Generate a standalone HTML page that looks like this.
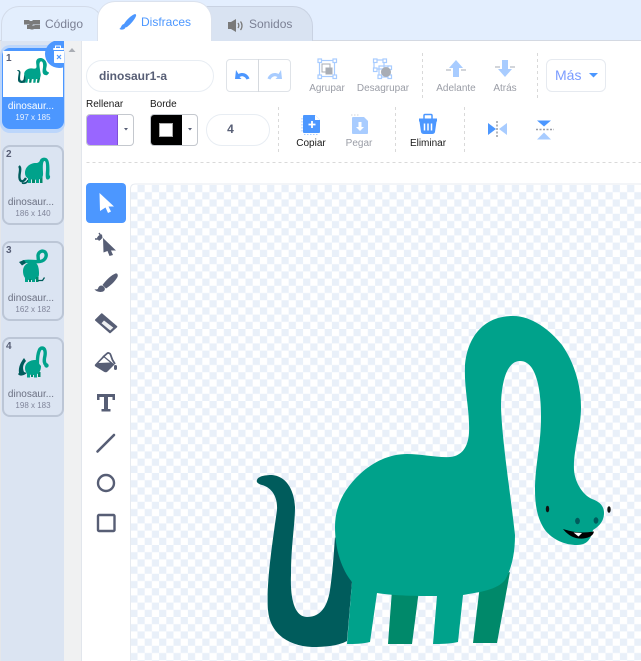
<!DOCTYPE html>
<html><head><meta charset="utf-8"><style>
html,body{margin:0;padding:0;background:#fff}
#p{position:relative;width:641px;height:661px;overflow:hidden;font-family:"Liberation Sans",sans-serif;color:#575e75;background:#fff}
#p div{position:absolute;box-sizing:border-box}
.t{white-space:nowrap;text-align:center;line-height:12px}
.l{font-size:10px;color:#9a9da6;width:70px}
.k{font-size:10px;color:#1a1a1a}
.n{font-size:10px;color:#6b7082;width:60px;left:1px}
.d{font-size:8px;color:#80859a;width:60px;left:3px}
.c{left:2px;width:62px;height:80px;border:2px solid #bcc6d6;border-radius:8px;background:#dbe4f2}
.i{font-size:10px;font-weight:bold;left:6px;color:#575e75}
svg{position:absolute;left:0;top:0}
</style></head><body><div id="p">
<div style="left:0;top:0;width:641px;height:41px;background:#e3eefe;border-bottom:1px solid #d4d9e2"></div>
<div style="left:1px;top:6px;width:102px;height:35px;background:#e3eefd;border:1px solid #d3dbe9;border-bottom:none;border-radius:18px 18px 0 0"></div>
<div style="left:205px;top:6px;width:108px;height:35px;background:#d9e3f2;border:1px solid #c9d2e2;border-bottom:none;border-radius:0 20px 0 0"></div>
<div style="left:97px;top:1px;width:115px;height:40px;background:#fff;border:1px solid #dbe2ee;border-bottom:none;border-radius:18px 18px 0 0"></div>
<div class="t" style="left:45px;top:18px;font-size:12px;color:#7b8094">Código</div>
<div class="t" style="left:141px;top:16px;font-size:12px;color:#4c97ff">Disfraces</div>
<div class="t" style="left:249px;top:18px;font-size:12px;color:#7b8094">Sonidos</div>

<div style="left:0;top:41px;width:64px;height:620px;background:#dbe4f2"></div>
<div style="left:0;top:41px;width:1px;height:620px;background:#e4e6ea"></div>
<div style="left:64px;top:41px;width:17px;height:620px;background:#f0f1f2"></div>
<div style="left:81px;top:41px;width:1px;height:620px;background:#e2e6ec"></div>

<div style="left:0;top:45px;width:65px;height:88px;background:#bcd6fb;border-radius:10px"></div>
<div style="left:2px;top:48px;width:62px;height:81px;background:#4c97ff;border-radius:8px"></div>
<div style="left:3px;top:51px;width:60px;height:46px;background:#fff"></div>
<div class="i" style="left:6px;top:53px">1</div>
<div class="t" style="left:1px;top:101px;width:60px;font-size:10px;color:#fff">dinosaur...</div>
<div class="t" style="left:3px;top:112px;width:60px;font-size:8px;color:#eaf2ff">197 x 185</div>

<div class="c" style="top:145px"></div><div class="i" style="top:149px">2</div>
<div class="t n" style="top:197px">dinosaur...</div><div class="t d" style="top:208px">186 x 140</div>
<div class="c" style="top:241px"></div><div class="i" style="top:245px">3</div>
<div class="t n" style="top:293px">dinosaur...</div><div class="t d" style="top:304px">162 x 182</div>
<div class="c" style="top:337px"></div><div class="i" style="top:341px">4</div>
<div class="t n" style="top:389px">dinosaur...</div><div class="t d" style="top:400px">198 x 183</div>

<div style="left:86px;top:60px;width:128px;height:32px;border:1px solid #e8edf3;border-radius:16px"></div>
<div class="t" style="left:99px;top:70px;font-size:12px;font-weight:bold;color:#575e75">dinosaur1-a</div>
<div style="left:226px;top:59px;width:65px;height:33px;border:1px solid #dfe3e8;border-radius:4px"></div>
<div style="left:258px;top:59px;width:1px;height:33px;background:#d5d9de"></div>
<div style="left:546px;top:59px;width:60px;height:33px;border:1px solid #e6eaf0;border-radius:6px"></div>
<div class="t" style="left:555px;top:68px;font-size:14px;line-height:15px;color:#7b9cff">Más</div>

<div class="t l" style="left:292px;top:83px;width:70px">Agrupar</div>
<div class="t l" style="left:348px;top:83px">Desagrupar</div>
<div class="t l" style="left:421px;top:83px">Adelante</div>
<div class="t l" style="left:470px;top:83px">Atrás</div>
<div class="t k" style="left:86px;top:99px">Rellenar</div>
<div class="t k" style="left:150px;top:99px">Borde</div>
<div style="left:86px;top:114px;width:48px;height:32px;border:1px solid #c4c8ce;border-radius:4px;overflow:hidden"><div style="left:-1px;top:-1px;width:32px;height:32px;background:#9966ff;border-right:1px solid #8050d8"></div></div>
<div style="left:150px;top:114px;width:48px;height:32px;border:1px solid #c4c8ce;border-radius:4px;overflow:hidden"><div style="left:-1px;top:-1px;width:32px;height:32px;background:#000"></div><div style="left:8px;top:8px;width:14px;height:14px;background:#fff;border:1px solid #aaa"></div></div>
<div style="left:206px;top:114px;width:64px;height:32px;border:1px solid #e8edf3;border-radius:16px"></div>
<div class="t" style="left:206px;top:123px;width:49px;font-size:12px;font-weight:bold;color:#575e75">4</div>
<div class="t k" style="left:276px;top:138px;width:70px">Copiar</div>
<div class="t l" style="left:324px;top:138px">Pegar</div>
<div class="t k" style="left:393px;top:138px;width:70px">Eliminar</div>

<div style="left:86px;top:183px;width:40px;height:40px;background:#4c97ff;border-radius:4px"></div>

<svg width="641" height="661" viewBox="0 0 641 661">
<defs>
<pattern id="ch" width="14.4" height="14.4" patternUnits="userSpaceOnUse" x="130.3" y="185">
<rect x="7.2" y="0" width="7.2" height="7.2" fill="#e9f0f9"/><rect x="0" y="7.2" width="7.2" height="7.2" fill="#e9f0f9"/>
</pattern>
<clipPath id="bc"><rect x="0" y="41" width="64" height="40"/></clipPath>
<g id="dinoG">
<path fill="#005c5c" d="M257 480C258 476 266 475 272 475C285 476 294 488 295 507C295 525 291 545 291 575C290 600 295 617 307 617C318 617 327 610 330 590C333 570 334 550 335 537L352 582L347 641C338 646 325 647 312 647C290 646 270 635 268 610C266 585 272 545 277 510C278 495 270 487 262 485C258 484 256 482 257 480Z"/>
<path fill="#00896a" d="M392 590L388 644H412L419 590ZM480 585L473 643H497L510 572Z"/>
<path fill="#00a28b" d="M335 527C335 505 345 488 360 474C375 460 392 454 407 454C422 454 438 458 450 457C462 456 468 447 469 433C470 410 464 390 465 367C466 345 478 316 513 316C532 316 550 330 562 345C574 362 581 385 581 407C581 430 573 450 574 470C575 483 583 495 592 499C600 502 604 506 604 513C604 522 598 527 593 530C591 538 588 545 577 545C565 545 553 540 545 530C538 520 535 507 535 490C535 465 541 445 541 417C541 395 538 361 520 361C506 361 501 385 501 407C502 440 510 490 515 535C515 555 511 570 505 580C497 590 480 592 463 595L458 642C450 644 440 644 433 644L437 596C420 596 395 596 377 593L370 642C362 644 355 644 347 644L352 582C342 570 335 550 335 527Z"/>
</g>
</defs>

<rect x="131" y="184" width="510" height="477" fill="#fff"/>
<rect x="131" y="185" width="510" height="476" fill="url(#ch)"/>
<path d="M130.500 661V189q0-5 5-5H641" fill="none" stroke="#e7ebf1"/>
<path d="M86.500 162.500H641" stroke="#d9d9d9" stroke-dasharray="3 3" fill="none"/>
<g stroke="#d9d9d9" stroke-dasharray="3 3" fill="none">
<path d="M422.500 53V98M537.500 53V98M278.500 107V153M395.500 107V153M464.500 107V153"/>
</g>
<use href="#dinoG"/>
<g fill="#111"><ellipse cx="547.500" cy="509" rx="1.700" ry="3.300"/><ellipse cx="609" cy="509.500" rx="1.700" ry="3.300"/></g>
<g fill="#005c5c"><ellipse cx="577.500" cy="521" rx="2.400" ry="3.200"/><ellipse cx="596" cy="520.500" rx="2.400" ry="3.200"/></g>
<path fill="#000" d="M563 529C570 531 578 534 594 531.500C593 537 586 539 579 538.500C572 538 566 533 563 529Z"/>
<path fill="#fff" d="M573.500 532.500L582 533L578.500 536.500Z"/>

<!-- tabs icons -->
<g fill="#7a7a7a"><path d="M24 20h5l1 1h2l1-1h7v4.500h-7l-1 1h-2l-1-1h-5zM27 25h4l1 .500h2l1-.500h5v4h-6l-1 .500h-2l-1-.500h-3v-4z"/></g>
<path fill="#4c97ff" d="M135 14c-3 1-8 5-11 10-1 2 1 4 3 3 4-3 8-8 9-11 .4-1-.2-2-1-2zM124 24c-2 .5-2.500 2-3 3-.3 1-1.500 1.500-1.500 2 2 1.200 5 .8 6-1.500.4-1.200-.5-3.500-1.500-3.500z"/>
<path fill="#7a7a7a" d="M228 22h3l5-3v13l-5-3h-3z"/>
<path fill="none" stroke="#7a7a7a" stroke-width="1.300" d="M238 23c1 1.500 1 3.500 0 5M240.500 21.500c2 2.500 2 6 0 8.500"/>

<!-- delete badge -->
<g clip-path="url(#bc)">
<circle cx="59" cy="54" r="14" fill="#4c97ff"/>
<rect x="53" y="48" width="11" height="2" fill="#fff" rx="1"/><path d="M55.500 48v-2h5v2" fill="none" stroke="#fff"/>
<path fill="#fff" d="M54 51h10v12h-9q-1 0-1-1z"/>
<path d="M57 55l4 4m0-4l-4 4" stroke="#4c97ff" stroke-width="1.200"/>
</g>
<path fill="#a9adb4" d="M68.500 52l3.500-4 3.500 4z"/>

<!-- thumb 1 -->
<svg x="17" y="58" width="32" height="25" viewBox="257 316 348 331" preserveAspectRatio="none"><use href="#dinoG"/></svg>
<!-- thumb 2 -->
<path d="M26 178C22 184 19 181 19.500 175C20 171 21 168 19 166" fill="none" stroke="#005c5c" stroke-width="2.400"/>
<path d="M22 183C25 184 28 182 28 180" stroke="#005c5c" stroke-width="1.600" fill="none"/>
<path d="M28 178v5h3v-5zM36 178v5h3v-5z" fill="#00a28b"/><path d="M32 178v5h3v-5zM40 177v6h2.500v-6z" fill="#00896a"/>
<path d="M25 173C25 167 30 163 36 163C38 163 39.500 162 40 160C41 158 44 157 46 158C49 159 49.500 164 49.500 170C49.500 173 49 175 50 176C50.500 178 49 180 47 179.500C45.500 179 45.500 175 46 170C46.200 165 46 161 44.500 161C43 161 42.500 165 43 172C43.500 177 42 179 38 179.500C33 180 25 180 25 173Z" fill="#00a28b"/>
<!-- thumb 3 -->
<path d="M23 262C28 260 34 262.500 40 261.500C46 260.500 47.500 255 45 252C42.500 250 38.500 251.500 38 255.500L38.500 262" fill="none" stroke="#00a28b" stroke-width="3.400"/>
<path d="M19 262l5-2 2 3-4 2.500z" fill="#005c5c"/>
<path d="M23 271C23 265 28 262 33 262C38 262 39 268 39 274C39 279 35 280 30 280C25 280 23 276 23 271Z" fill="#00a28b"/>
<path d="M25 278v4h3v-4zM32 278v4h3v-4z" fill="#00a28b"/><path d="M29 279v3h2v-3zM36 277v5h2.500v-5z" fill="#00896a"/>
<path d="M38 280.500h4.500l2-3" fill="none" stroke="#005c5c" stroke-width="1.300"/>
<!-- thumb 4 -->
<path d="M19 373C18 367 21 362 24 358L26 361C23.500 364 22 367 24 372L27 373C23 376.500 19 376 18 374Z" fill="#005c5c"/>
<path d="M27 373v4.500h3v-4.500zM34 373v4.500h3v-4.500z" fill="#00a28b"/><path d="M31 373v4h2v-4zM38 372v5h2.500v-5z" fill="#00896a"/>
<path d="M25 368C25 363 30 360 35 360C37 360 38 361 38.500 363L41 366C41 372 38 375 33 375C28 375 25 373 25 368Z" fill="#00a28b"/>
<path d="M37.500 366C37 355 39 348 42 348C45 348 46 352 44.500 358C44 361 44 363 46 365" fill="none" stroke="#00a28b" stroke-width="3.400"/>
<circle cx="46.500" cy="365.500" r="2.200" fill="#00a28b"/>

<!-- undo redo -->
<path fill="#4c97ff" d="M236 70l-1 9h6.500l-2-2c2.500-1.600 5.500-.8 7 2.500l3-1c-1.500-4.500-6.500-7-11-4.500z"/>
<path fill="#a8ccff" d="M281 70l1 9h-6.500l2-2c-2.500-1.600-5.500-.8-7 2.500l-3-1c1.500-4.500 6.500-7 11-4.500z"/>
<!-- group -->
<g fill="none" stroke="#a8ccff" stroke-width="1.200"><rect x="319.500" y="60.500" width="15" height="16"/></g>
<g fill="#fff" stroke="#a8ccff" stroke-width="1.200"><rect x="318" y="59" width="3.500" height="3.500"/><rect x="333" y="59" width="3.500" height="3.500"/><rect x="318" y="75" width="3.500" height="3.500"/><rect x="333" y="75" width="3.500" height="3.500"/></g>
<rect x="322" y="64" width="8" height="8" fill="#fff" stroke="#a9adb4"/><rect x="325.500" y="67.500" width="7" height="7" fill="#a9adb4"/>
<!-- ungroup -->
<g fill="none" stroke="#a8ccff" stroke-width="1.200"><rect x="374" y="60" width="10" height="9"/><rect x="379" y="66" width="11" height="11"/></g>
<g fill="#fff" stroke="#a8ccff" stroke-width="1.200"><rect x="373.500" y="59" width="3.500" height="3.500"/><rect x="383" y="59" width="3.500" height="3.500"/><rect x="373.500" y="68" width="3.500" height="3.500"/><rect x="388" y="66" width="3.500" height="3.500"/><rect x="378" y="75" width="3.500" height="3.500"/><rect x="388" y="75" width="3.500" height="3.500"/></g>
<circle cx="386" cy="72" r="5" fill="#a9adb4"/>
<!-- front/back -->
<path fill="#a8ccff" d="M456 60l7 8h-4v9h-6v-9h-4z"/><path stroke="#b8bcc4" stroke-width="1.200" d="M446 70h5M461 70h5"/>
<path fill="#a8ccff" d="M505 77l-7-8h4v-9h6v9h4z"/><path stroke="#b8bcc4" stroke-width="1.200" d="M495 67h5M510 67h5"/>
<!-- mas caret -->
<path fill="#4c97ff" d="M589 73h9l-4.500 4.500z"/>
<!-- carets -->
<path fill="#575e75" d="M124 128h4l-2 2.500z M188 128h4l-2 2.500z"/>
<!-- copy -->
<path fill="#4c97ff" d="M304 115h11l5 5v12q0 1-1 1h-15q-1 0-1-1v-16q0-1 1-1z"/>
<path fill="#fff" d="M315 115v5h5z"/><path stroke="#fff" stroke-width="1.800" d="M312 121v7M308.500 124.500h7"/>
<path stroke="#a8ccff" stroke-dasharray="1.500 1.500" fill="none" d="M302 118v15M304 134.500h14"/>
<!-- paste -->
<path fill="#a8ccff" d="M353 117h11l4 4v12q0 1-1 1h-14q-1 0-1-1v-15q0-1 1-1z"/>
<path fill="#fff" d="M358.500 122h3v5h2.500l-4 4-4-4h2.500z"/>
<path stroke="#d0d4da" stroke-dasharray="1.500 1.500" fill="none" d="M351 115h8"/>
<!-- trash -->
<path fill="#4c97ff" d="M419 118.500h18v3h-.5l-1.500 10.500q-.5 2-3 2h-8q-2.500 0-3-2l-1.500-10.500h-.5z"/>
<path fill="none" stroke="#4c97ff" stroke-width="1.500" d="M424 118.500v-3q0-1 1-1h6q1 0 1 1v3"/>
<path stroke="#fff" stroke-width="1.500" d="M424.500 123.500v7M428 123.500v7M431.500 123.500v7"/>
<!-- flip -->
<path fill="#4c97ff" d="M488 123l8 6-8 6z"/><path fill="#a8ccff" d="M507 123l-8 6 8 6z"/>
<path stroke="#9a9da6" stroke-width="1.500" stroke-dasharray="2 1.500" d="M497 121v17"/>
<path fill="#4c97ff" d="M537 120.500h14l-7 6z"/><path fill="#a8ccff" d="M537 139.500h14l-7-7z"/>
<path stroke="#9a9da6" stroke-width="1.500" stroke-dasharray="2 1.500" d="M536 129.500h18"/>

<!-- tools -->
<path fill="#fff" d="M99.500 193l14.500 13.500h-5.500l2.500 5-3 1.500-2.500-5.500-5.500 3.500z"/>
<path fill="#575e75" d="M103 238l13 12.500h-5l2 4.500-3.500 1-2-5-4 1.500z"/>
<path fill="none" stroke="#575e75" stroke-width="1.400" d="M95 239h6M99 233l2 3"/>
<path fill="#575e75" d="M97 238c1-2.500 3-3.500 5-3.500l.5 3.500-3.500 3z"/>
<path fill="#575e75" d="M115.500 273.500c-4 1.500-9 6-13 11.500l3.500 3.500c4.500-3 9-7 11.500-11.500.8-2-.2-4-2-3.500z"/>
<path fill="#575e75" d="M101.500 285.500c-2 0-3 1.500-3.500 3-.3 1-2 1-3.500 .8 1.500 2.500 6.500 3.500 9 2 2.500-1.500 1.500-5-2-5.800z"/>
<path fill="#575e75" stroke="#575e75" stroke-width="1.500" stroke-linejoin="round" d="M101.700 314L116.600 326.700L110 332.600L95.700 320Z"/>
<path fill="#fff" d="M104 320.500L113.300 327.600L110.200 330.500L101.500 323.300Z" opacity=".9"/>
<path fill="#575e75" d="M95.500 364l8-8.500 11 9-7 7c-1 1-2.500 1-3.500 .2l-8.500-5.200c-1-.7-1-1.700 0-2.500z"/>
<path fill="#fff" d="M98.500 363l5.500-5.500 6 5z"/>
<path fill="none" stroke="#575e75" stroke-width="1.800" d="M103 357l4-3.500c1-1 3-.5 3.500 1l2 5.500 2.500 4"/>
<rect x="114" y="365" width="3" height="5" rx="1.500" fill="#575e75"/>
<path fill="#575e75" d="M97 394h18v6h-2.500v-3H108v12h2.500v2.500h-9V409H104V397h-4.500v3H97z"/>
<path stroke="#575e75" stroke-width="2.600" stroke-linecap="round" d="M97.500 451.500L114 435"/>
<circle cx="106" cy="483" r="8" fill="none" stroke="#575e75" stroke-width="2.400"/>
<rect x="98" y="515" width="16.500" height="16" rx="1" fill="none" stroke="#575e75" stroke-width="2.400"/>
</svg>
</div></body></html>
